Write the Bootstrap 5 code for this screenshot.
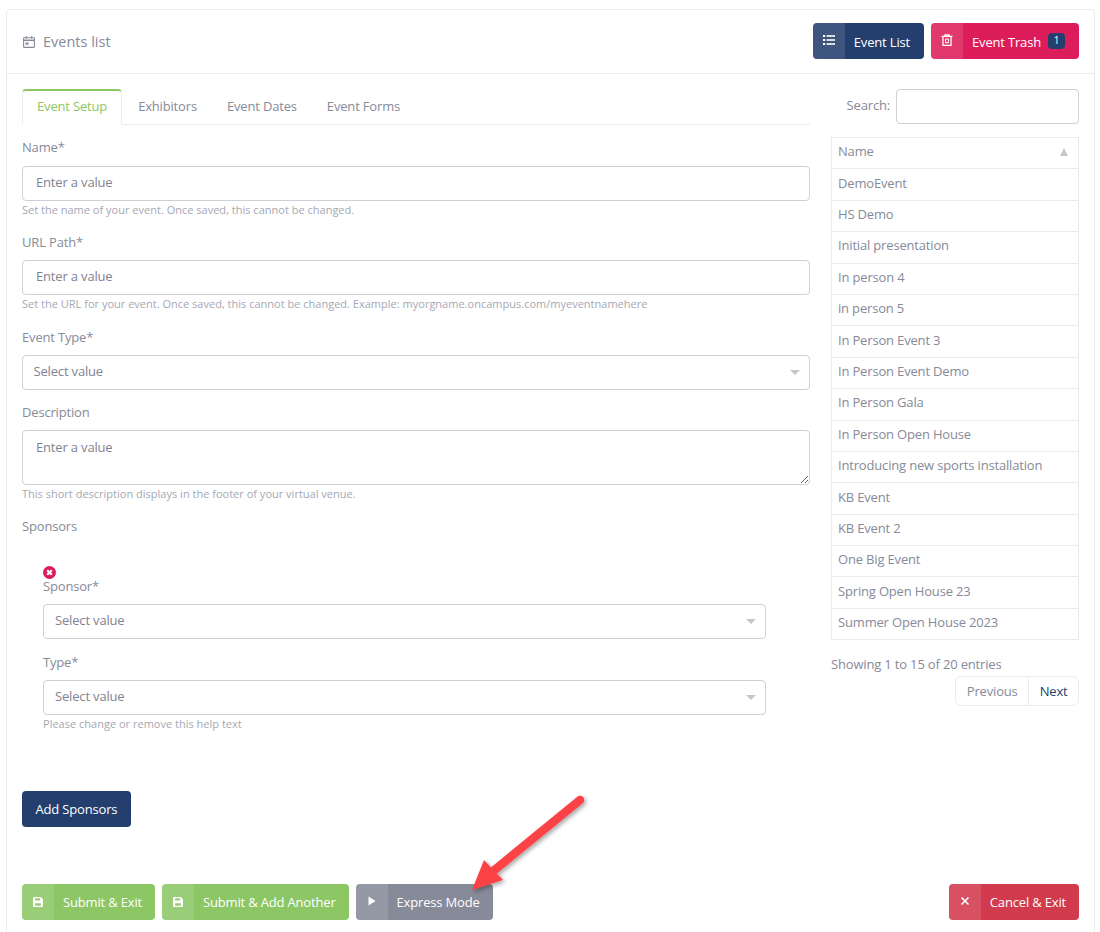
<!DOCTYPE html>
<html lang="en">
<head>
<meta charset="utf-8">
<title>Events list</title>
<link href="https://cdn.jsdelivr.net/npm/bootstrap@5.3.0/dist/css/bootstrap.min.css" rel="stylesheet">
<style>
html,body{height:932px;overflow:hidden}
body{background:#fff;font-family:"Open Sans",sans-serif;font-size:13px;letter-spacing:-.17px;color:#878a99;line-height:19.5px;position:relative;padding:9px 5px 0 6px}
.shell{border:1px solid #e9ebec;border-radius:4px 4px 0 0;height:960px;background:#fff}
.shell-head{height:64px;border-bottom:1px solid #e9ebec;padding:0 15px 2px;display:flex;align-items:center;justify-content:space-between}
.shell-title{font-size:14.5px;letter-spacing:0;display:flex;align-items:center;gap:8px;color:#878a99;margin:3px 0 0 1px}
.shell-body{padding:15px 15px 0;display:flex;flex-direction:column}
.main-col{width:788px}
.side-col{width:248px}
.btn-lab{display:inline-flex;align-items:stretch;height:36px;padding:0;border:0;border-radius:4px;font-size:13px;letter-spacing:-.17px;color:#fff;overflow:hidden;line-height:36px}
.btn-lab:hover{color:#fff}
.lab-ico{width:32px;background:rgba(255,255,255,.12);display:flex;justify-content:center;padding-top:11px}
.lab-ico svg{display:block}
.lab-ico-sm{padding-top:13px}
.lab-txt{padding:1px 13px 0 9px}
.foot-row .lab-txt{padding-top:0}
.lab-navy{background:#243f6e}
.lab-navy .lab-txt{padding-right:14px}
.lab-pink{background:#dd1d5b}
.lab-pink .lab-txt{padding-right:14px}
.lab-green{background:#8cc665}
.lab-gray{background:#878a99}
.lab-red{background:#d23a4d}
.cnt{display:inline-block;background:#243f6e;color:#fff;font-size:10px;font-weight:400;width:17px;height:16px;line-height:15px;text-align:center;border-radius:4px;margin:-2px 0 0 7px;vertical-align:middle;position:relative;top:-1px}
.tabs-line{border-bottom:1px solid #e9ebec;height:36px}
.tabs-line .nav-link{color:#878a99;font-size:13px;padding:7px 14px 8px;height:36px;border:1px solid transparent;border-radius:4px 4px 0 0;margin:0}
.tabs-line .nav-link.active{color:#8cc665;background:#fff;border-color:#e9ebec #e9ebec #fff;border-top:2px solid #8cc665;padding-top:6px;margin-right:1px}
.tab-gap{height:13px}
.fld-lab{display:block;margin:0 0 8px;color:#878a99;line-height:19px}
.fld-first{margin-bottom:9px}
.fld-in{height:35px;border:1px solid #ced0d8;border-radius:4px;font-size:13px;letter-spacing:-.17px;color:#878a99;padding:0 13px 3px;box-shadow:none}
.fld-in::placeholder{color:#7f8292;opacity:1}
.fld-area{height:55px;padding:7px 13px}
.fld-sel{height:35px;border:1px solid #ced0d8;border-radius:4px;font-size:13px;letter-spacing:-.17px;color:#7f8292;padding:0 11px 2px 10.500px;background-image:url("data:image/svg+xml,%3Csvg xmlns='http://www.w3.org/2000/svg' width='10' height='5'%3E%3Cpath d='M0 0h10L5 5z' fill='%23c4c6cd'/%3E%3C/svg%3E");background-position:right 9px center;background-size:10px 5px}
.fld-help{font-size:11.03px;letter-spacing:0;line-height:15px;color:#a5a8b4;margin-top:1px}
.gap-url{margin-top:16px}
.gap-type{margin-top:17px}
.gap-desc{margin-top:13px}
.gap-spons{margin-top:16px}
.gap-t2{margin-top:14px}
.spons{margin:29px 0 0 21px;width:723px}
.spons .fld-sel{padding:0 11px 0 11px}
.rm-ico{display:block;margin:1px 0 -2px}
.add-row{margin-top:60px}
.add-btn{background:#243f6e;color:#fff;font-size:13px;letter-spacing:-.17px;height:36px;border:0;border-radius:4px;padding:2px 13.500px 0}
.foot-row{margin-top:57px}
.srch{height:35px;margin-bottom:13px;gap:6px}
.srch span{position:relative;top:-1px}
.srch input{width:183px;height:35px;border:1px solid #ced0d8;border-radius:4px}
.list-tb{margin:0;width:100%;--bs-table-color:#878a99;--bs-table-border-color:#e9ebec;border-color:#e9ebec}
.list-tb td,.list-tb th{font-size:13px;font-weight:400;padding:0 6px 2.800px;height:31.4px;vertical-align:middle;line-height:19px;color:#878a99}
.list-tb th{padding-bottom:3px}
.sort-mark{float:right;width:0;height:0;border-left:4.5px solid transparent;border-right:4.5px solid transparent;border-bottom:8px solid #c4c6cd;margin:6px 4px 0 0}
.tb-info{margin-top:15px;line-height:19px}
.pager{margin:2px 0 0;justify-content:flex-end}
.pager .page-link{font-size:13px;height:30px;line-height:18px;padding:5px 10.500px;border-color:#e9ebec;color:#878a99}
.pager .page-item:last-child .page-link{color:#243f6e}
.arrow-over{position:absolute;left:0;top:0;pointer-events:none}
</style>
</head>
<body>
<div class="shell">
  <div class="shell-head">
    <div class="shell-title">
      <svg width="12" height="12" viewBox="0 0 12 12" fill="none" stroke="#878a99" stroke-width="1.100"><rect x=".6" y="1.800" width="10.800" height="9.600" rx=".6"/><path d="M.6 4.300h10.800" stroke-width="1.500"/><path d="M3.300 0v2.600M8.700 0v2.600"/><rect x="2.500" y="6.500" width="3" height="2.200" fill="#878a99" stroke="none"/></svg>
      <span>Events list</span>
    </div>
    <div class="d-flex head-btns" style="gap:7px">
      <a class="btn btn-lab lab-navy" href="#"><span class="lab-ico"><svg width="12" height="12" viewBox="0 0 12 12" fill="#fff"><rect x="0" y="1" width="2.200" height="2"/><rect x="0" y="5" width="2.200" height="2"/><rect x="0" y="9" width="2.200" height="2"/><rect x="3.600" y="1.200" width="8.400" height="1.600"/><rect x="3.600" y="5.200" width="8.400" height="1.600"/><rect x="3.600" y="9.200" width="8.400" height="1.600"/></svg></span><span class="lab-txt">Event List</span></a>
      <a class="btn btn-lab lab-pink" href="#"><span class="lab-ico"><svg width="12" height="12" viewBox="0 0 12 12" fill="none" stroke="#fff" stroke-width="1.300"><path d="M.5 2.400h11M4 2.200V.8h4v1.400M2 2.400v8.900h8V2.400"/><path d="M4.600 5v3.800h2.800V5z" stroke-width="1"/></svg></span><span class="lab-txt">Event Trash<span class="cnt">1</span></span></a>
    </div>
  </div>
  <div class="shell-body">
    <div class="d-flex justify-content-between">
      <div class="main-col">
        <ul class="nav nav-tabs tabs-line">
          <li class="nav-item"><a class="nav-link active" href="#">Event Setup</a></li>
          <li class="nav-item"><a class="nav-link" href="#">Exhibitors</a></li>
          <li class="nav-item"><a class="nav-link" href="#">Event Dates</a></li>
          <li class="nav-item"><a class="nav-link" href="#">Event Forms</a></li>
        </ul>
        <div class="tab-gap"></div>
        <label class="fld-lab fld-first">Name*</label>
        <input class="form-control fld-in" placeholder="Enter a value">
        <div class="fld-help">Set the name of your event. Once saved, this cannot be changed.</div>
        <label class="fld-lab gap-url">URL Path*</label>
        <input class="form-control fld-in" placeholder="Enter a value">
        <div class="fld-help">Set the URL for your event. Once saved, this cannot be changed. Example: myorgname.oncampus.com/myeventnamehere</div>
        <label class="fld-lab gap-type">Event Type*</label>
        <select class="form-select fld-sel"><option>Select value</option></select>
        <label class="fld-lab gap-desc">Description</label>
        <textarea class="form-control fld-in fld-area" placeholder="Enter a value"></textarea>
        <div class="fld-help">This short description displays in the footer of your virtual venue.</div>
        <div class="gap-spons">Sponsors</div>
        <div class="spons">
          <svg class="rm-ico" width="13" height="13" viewBox="0 0 13 13"><circle cx="6.5" cy="6.5" r="6.5" fill="#dd1d5b"/><path d="M4.200 4.200l4.600 4.600M8.800 4.200l-4.600 4.600" stroke="#fff" stroke-width="2.200"/></svg>
          <label class="fld-lab">Sponsor*</label>
          <select class="form-select fld-sel"><option>Select value</option></select>
          <label class="fld-lab gap-t2">Type*</label>
          <select class="form-select fld-sel"><option>Select value</option></select>
          <div class="fld-help">Please change or remove this help text</div>
        </div>
      </div>
      <div class="side-col">
        <div class="srch d-flex justify-content-end align-items-center"><span>Search:</span><input class="form-control" type="search" aria-label="Search"></div>
        <table class="table table-bordered list-tb">
          <thead><tr><th>Name<span class="sort-mark"></span></th></tr></thead>
          <tbody>
            <tr><td>DemoEvent</td></tr>
            <tr><td>HS Demo</td></tr>
            <tr><td>Initial presentation</td></tr>
            <tr><td>In person 4</td></tr>
            <tr><td>in person 5</td></tr>
            <tr><td>In Person Event 3</td></tr>
            <tr><td>In Person Event Demo</td></tr>
            <tr><td>In Person Gala</td></tr>
            <tr><td>In Person Open House</td></tr>
            <tr><td>Introducing new sports installation</td></tr>
            <tr><td>KB Event</td></tr>
            <tr><td>KB Event 2</td></tr>
            <tr><td>One Big Event</td></tr>
            <tr><td>Spring Open House 23</td></tr>
            <tr><td>Summer Open House 2023</td></tr>
          </tbody>
        </table>
        <div class="tb-info">Showing 1 to 15 of 20 entries</div>
        <ul class="pagination pager">
          <li class="page-item"><a class="page-link" href="#">Previous</a></li>
          <li class="page-item"><a class="page-link" href="#">Next</a></li>
        </ul>
      </div>
    </div>
    <div class="add-row"><button class="add-btn" type="button">Add Sponsors</button></div>
    <div class="d-flex justify-content-between foot-row">
      <div class="d-flex" style="gap:7px">
        <a class="btn btn-lab lab-green" href="#"><span class="lab-ico lab-ico-sm"><svg width="10" height="10" viewBox="0 0 12 12" fill="#fff"><path fill-rule="evenodd" d="M1.200 0h8L12 2.800v8A1.200 1.200 0 0 1 10.800 12H1.200A1.200 1.200 0 0 1 0 10.800V1.200A1.200 1.200 0 0 1 1.200 0zM2.600 1.600v2.600h6V1.600zM2.600 7.400v3h6.800v-3z"/></svg></span><span class="lab-txt">Submit &amp; Exit</span></a>
        <a class="btn btn-lab lab-green" href="#"><span class="lab-ico lab-ico-sm"><svg width="10" height="10" viewBox="0 0 12 12" fill="#fff"><path fill-rule="evenodd" d="M1.200 0h8L12 2.800v8A1.200 1.200 0 0 1 10.800 12H1.200A1.200 1.200 0 0 1 0 10.800V1.200A1.200 1.200 0 0 1 1.200 0zM2.600 1.600v2.600h6V1.600zM2.600 7.400v3h6.800v-3z"/></svg></span><span class="lab-txt">Submit &amp; Add Another</span></a>
        <a class="btn btn-lab lab-gray" href="#"><span class="lab-ico"><svg width="12" height="12" viewBox="0 0 12 12" fill="#fff"><path d="M2.500 1.500l7 4.500-7 4.500z"/></svg></span><span class="lab-txt">Express Mode</span></a>
      </div>
      <a class="btn btn-lab lab-red" href="#"><span class="lab-ico"><svg width="12" height="12" viewBox="0 0 12 12" stroke="#fff" stroke-width="1.600"><path d="M2.500 2.500l7 7M9.500 2.500l-7 7"/></svg></span><span class="lab-txt">Cancel &amp; Exit</span></a>
    </div>
  </div>
</div>
<svg class="arrow-over" width="1100" height="932" viewBox="0 0 1100 932">
  <defs><filter id="shd" x="-20%" y="-20%" width="150%" height="150%"><feDropShadow dx="2" dy="2" stdDeviation="2" flood-color="#000" flood-opacity=".35"/></filter></defs>
  <g filter="url(#shd)"><path d="M580 800L492 872" stroke="#fb4246" stroke-width="8.500" stroke-linecap="round" fill="none"/><path d="M472 890L484 860L503 880z" fill="#fb4246"/></g>
</svg>
</body>
</html>
